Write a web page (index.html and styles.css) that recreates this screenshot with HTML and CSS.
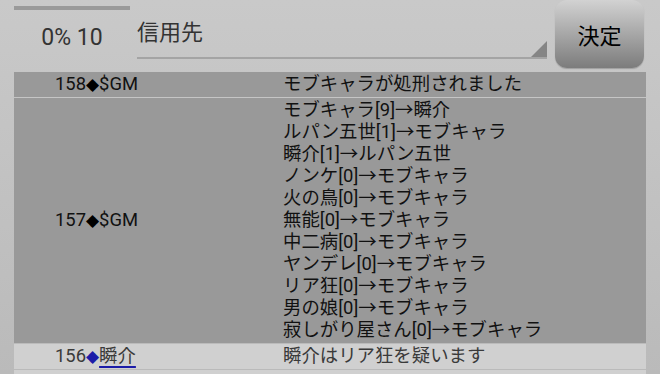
FILE: index.html
```html
<!doctype html>
<html>
	<head>
		<meta charset="utf-8">
		<link rel="stylesheet" href="styles.css">
	</head>
	<body>
		<div id="header">
			<div id="timer">
				<div class="bar"></div>
				<div class="count">0% 10</div>
			</div>
			<div id="target">
				<span>信用先</span>
				<div class="arrow"></div>
			</div>
			<div id="decide">決定</div>
		</div>
		<table id="log">
			<tr class="sys">
				<td class="who">158<span class="dia">◆</span>$GM</td>
				<td class="msg">モブキャラが処刑されました</td>
			</tr>
			<tr class="sys">
				<td class="who">157<span class="dia">◆</span>$GM</td>
				<td class="msg">
					モブキャラ[9]→瞬介<br>
					ルパン五世[1]→モブキャラ<br>
					瞬介[1]→ルパン五世<br>
					ノンケ[0]→モブキャラ<br>
					火の鳥[0]→モブキャラ<br>
					無能[0]→モブキャラ<br>
					中二病[0]→モブキャラ<br>
					ヤンデレ[0]→モブキャラ<br>
					リア狂[0]→モブキャラ<br>
					男の娘[0]→モブキャラ<br>
					寂しがり屋さん[0]→モブキャラ
				</td>
			</tr>
			<tr class="talk">
				<td class="who">156<span class="dia blue">◆</span><a>瞬介</a></td>
				<td class="msg">瞬介はリア狂を疑います</td>
			</tr>
			<tr class="talk">
				<td class="who">&nbsp;</td>
				<td class="msg">&nbsp;</td>
			</tr>
		</table>
	</body>
</html>
```

FILE: styles.css
```css
*{
	margin: 0;
	padding: 0;
}
html{
	height: 374px;
	overflow: hidden;
}
body{
	background: linear-gradient(#c9c9c9, #bababa);
	height: 374px;
	overflow: hidden;
	font-family: Roboto, "Noto Sans CJK JP", sans-serif;
	color: #111;
}

/**
 * header: timer, target select and button
 */
#header{
	display: flex;
	height: 71px;
	padding-left: 14px;
}
#timer{
	width: 116px;
}
#timer .bar{
	height: 4px;
	margin-top: 6px;
	background: #9a9a9a;
}
#timer .count{
	text-align: center;
	font-size: 23px;
	color: #333;
	margin-top: 14px;
}
#target{
	position: relative;
	width: 410px;
	height: 59px;
	margin-left: 7px;
	border-bottom: 2px solid #a4a4a4;
	font-size: 22px;
	color: #333;
	line-height: 30px;
	padding-top: 18px;
	box-sizing: border-box;
}
#target .arrow{
	position: absolute;
	right: 0;
	bottom: 0;
	width: 0;
	height: 0;
	border-left: 16px solid transparent;
	border-bottom: 16px solid #858585;
}
#decide{
	width: 89px;
	height: 68px;
	margin-left: 8px;
	border-radius: 12px;
	background: linear-gradient(#d2d2d2, #7c7c7c);
	box-shadow: 0 1px 1px rgba(0,0,0,0.2);
	font-size: 22px;
	color: #000;
	display: flex;
	align-items: center;
	justify-content: center;
}

/**
 * log table
 */
#log{
	margin: 0 14px;
	width: 632px;
	border-spacing: 0 1px;
	font-size: 18.4px;
	line-height: 22px;
}
#log td{
	padding: 1px 0 2px;
	vertical-align: middle;
}
#log .who{
	width: 228px;
	padding-left: 41px;
	white-space: nowrap;
}
#log .sys td{
	background: #999;
	color: #111;
}
#log .talk td{
	background: #d0d0d0;
	color: #3a3a3a;
}
.dia{
	font-family: "DejaVu Sans", sans-serif;
	font-size: 17px;
	color: #000;
}
.dia.blue{
	color: #1c1ca8;
}
#log a{
	text-decoration: underline;
	text-decoration-color: #1c1ca8;
	text-decoration-thickness: 2px;
	text-underline-offset: 4px;
}
```
